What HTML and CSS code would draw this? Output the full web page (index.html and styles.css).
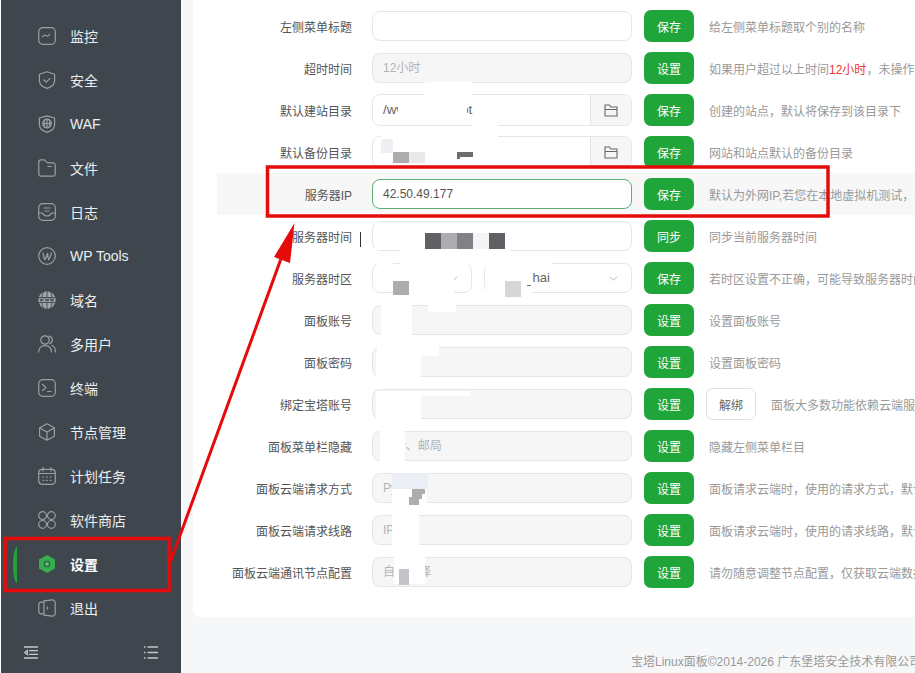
FILE: index.html
```html
<!DOCTYPE html>
<html lang="zh-CN">
<head>
<meta charset="utf-8">
<title>面板设置</title>
<link rel="stylesheet" href="styles.css">
</head>
<body>
<div class="page">
  <aside class="sidebar">
    <nav class="nav">
      <a class="nav-item"><svg class="ico" viewBox="0 0 18 18"><path d="M2 8 9 2l7 6v7a1.500 1.500 0 0 1-1.500 1.500h-11A1.500 1.500 0 0 1 2 15z"/></svg><span>首页</span></a>
      <a class="nav-item"><svg class="ico" viewBox="0 0 18 18"><rect x="0.700" y="0.700" width="16.600" height="16.600" rx="4"/><path d="M4.500 9.800c1.300-2 2.300-2.200 3.500-1.200s2.300.8 3.500-1.300"/></svg><span>监控</span></a>
      <a class="nav-item"><svg class="ico" viewBox="0 0 18 18"><path d="M9 .8 16.600 3.200v6.300c0 4-3.300 6.700-7.600 7.800C4.700 16.200 1.400 13.500 1.400 9.500V3.200z"/><path d="m6 9 2.200 2.100L12 7.400"/></svg><span>安全</span></a>
      <a class="nav-item"><svg class="ico" viewBox="0 0 18 18"><path d="M9 .8 16.600 3v6.500c0 4-3.300 6.700-7.600 7.800C4.700 16.200 1.400 13.500 1.400 9.500V3z"/><circle cx="9" cy="8.500" r="4.300"/><path d="M4.700 8.500h8.600M9 4.200v8.600M6.800 4.800c-1 2.400-1 5 0 7.400M11.200 4.800c1 2.400 1 5 0 7.400"/></svg><span>WAF</span></a>
      <a class="nav-item"><svg class="ico" viewBox="0 0 18 18"><path d="M.8 3A2.200 2.200 0 0 1 3 .8h3.500l3 3H15A2.200 2.200 0 0 1 17.200 6v9a2.200 2.200 0 0 1-2.200 2.200H3A2.200 2.200 0 0 1 .8 15z"/><path d="M10 7.500h3.500"/></svg><span>文件</span></a>
      <a class="nav-item"><svg class="ico" viewBox="0 0 18 18"><rect x="0.700" y="0.700" width="16.600" height="16.600" rx="4"/><path d="M.8 10h3.700c1 2.300 2.500 3 4.500 3s3.500-.7 4.500-3h3.700M6 5h6M7 8h4"/></svg><span>日志</span></a>
      <a class="nav-item"><svg class="ico" viewBox="0 0 18 18"><circle cx="9" cy="9" r="8.300"/><path d="M5 6c.5 2.500 1 5 1.800 6.800C8 10.500 9 8.500 9.700 6.300c0 2.500.2 4.700.9 6.500 1.400-2 2.400-4.300 2.700-7"/></svg><span>WP Tools</span></a>
      <a class="nav-item"><svg class="ico ico-fill" viewBox="0 0 18 18"><circle cx="9" cy="9" r="8.700"/><path class="cut" d="M0 6.500h18M0 11.500h18M9 0v6M9 12v6M5.500 1c-1 1.500-1.400 3.400-1.500 5.500M12.500 1c1 1.500 1.400 3.400 1.500 5.500M4 11.500c.1 2 .5 4 1.500 5.500M14 11.500c-.1 2-.5 4-1.500 5.500"/><path class="cut" d="m2 7.800.8 2.400.8-2.400.8 2.400.8-2.400M7.200 7.800l.9 2.400.9-2.400.9 2.400.9-2.400M12.400 7.800l.8 2.400.8-2.400.8 2.400.8-2.400"/></svg><span>域名</span></a>
      <a class="nav-item"><svg class="ico" viewBox="0 0 18 18"><circle cx="7" cy="5" r="4.200"/><path d="M.6 17c0-4 2.700-6.300 6.400-6.300s6.400 2.300 6.400 6.300M11 1.200c2 .3 3.300 1.800 3.300 3.800 0 1.700-1 3-2.500 3.600M14 10.500c2 .8 3.400 3 3.400 6.500"/></svg><span>多用户</span></a>
      <a class="nav-item"><svg class="ico" viewBox="0 0 18 18"><rect x="0.700" y="0.700" width="16.600" height="16.600" rx="4"/><path d="m4.500 5.500 3.500 3-3.500 3M9.500 12.500h3.500"/></svg><span>终端</span></a>
      <a class="nav-item"><svg class="ico" viewBox="0 0 18 18"><path d="M9 .8 16.400 4.800v8.400L9 17.200 1.600 13.200V4.800zM1.800 5 9 9l7.200-4M9 9v8"/></svg><span>节点管理</span></a>
      <a class="nav-item"><svg class="ico" viewBox="0 0 18 18"><rect x="0.700" y="2.300" width="16.600" height="15" rx="3.500"/><path d="M.8 6.500h16.400M5 .5v3.500M13 .5v3.500M5 10h.8M8.600 10h.8M12.200 10h.8M5 13.300h.8M8.600 13.300h.8M12.200 13.300h.8"/></svg><span>计划任务</span></a>
      <a class="nav-item"><svg class="ico" viewBox="0 0 18 18"><circle cx="4.600" cy="4.600" r="3.900"/><circle cx="13.400" cy="4.600" r="3.900"/><circle cx="4.600" cy="13.400" r="3.900"/><circle cx="13.400" cy="13.400" r="3.900"/></svg><span>软件商店</span></a>
      <a class="nav-item nav-active"><i class="nav-bar"></i><svg class="ico ico-hex" viewBox="0 0 18 18"><path class="hex" d="M9 0 17 4.500v9L9 18 1 13.500v-9z"/><circle class="hex-ring" cx="9" cy="9" r="2.600"/></svg><span>设置</span></a>
      <a class="nav-item"><svg class="ico" viewBox="0 0 18 18"><path d="M6 3.200H3A2.200 2.200 0 0 0 .8 5.400v7.200A2.200 2.200 0 0 0 3 14.800h3M6 1.800 14 .8a3 3 0 0 1 3.200 3v10.400a3 3 0 0 1-3.200 3l-8-1zM9.500 8v2"/></svg><span>退出</span></a>
    </nav>
    <div class="side-tools">
      <svg class="tool" viewBox="0 0 14 13"><path d="M0 1h14M5 4.700h9M5 8.300h9M0 12h14M3.300 4.500 .6 6.500l2.700 2z"/></svg>
      <svg class="tool" viewBox="0 0 14 13"><path d="M3.500 1H14M3.500 6.500H14M3.500 12H14M0 1h1.500M0 6.500h1.500M0 12h1.500"/></svg>
    </div>
  </aside>

  <main class="main">
    <section class="card">
      <div class="row"><label class="lbl">左侧菜单标题</label><div class="field"><div class="inp"></div></div><button class="btn">保存</button><p class="desc">给左侧菜单标题取个别的名称</p></div>
      <div class="row"><label class="lbl">超时时间</label><div class="field"><div class="inp off">12小时</div></div><button class="btn">设置</button><p class="desc">如果用户超过以上时间<em class="hot">12小时</em>，未操作面板将自动退出</p></div>
      <div class="row"><label class="lbl">默认建站目录</label><div class="field"><div class="inp tall group"><span class="grow path">/www/wwwroot</span><span class="addon"><svg class="fold" viewBox="0 0 14 14"><path d="M1 13V2h4.500l1.300 2H13v9zM1 6.500h12"/></svg></span></div></div><button class="btn">保存</button><p class="desc">创建的站点，默认将保存到该目录下</p></div>
      <div class="row"><label class="lbl">默认备份目录</label><div class="field"><div class="inp tall group"><span class="grow"></span><span class="addon"><svg class="fold" viewBox="0 0 14 14"><path d="M1 13V2h4.500l1.300 2H13v9zM1 6.500h12"/></svg></span></div></div><button class="btn">保存</button><p class="desc">网站和站点默认的备份目录</p></div>
      <div class="row row-hover"><label class="lbl">服务器IP</label><div class="field"><div class="inp focus">42.50.49.177</div></div><button class="btn">保存</button><p class="desc">默认为外网IP,若您在本地虚拟机测试，请填写虚拟机IP</p></div>
      <div class="row"><label class="lbl">服务器时间</label><div class="field"><div class="inp"></div></div><button class="btn">同步</button><p class="desc">同步当前服务器时间</p></div>
      <div class="row"><label class="lbl">服务器时区</label><div class="field split"><div class="inp sel sel-a"><svg class="chev" viewBox="0 0 12 7"><path d="m1 1 5 5 5-5"/></svg></div><div class="inp sel sel-b"><span class="zone">Shanghai</span><svg class="chev" viewBox="0 0 12 7"><path d="m1 1 5 5 5-5"/></svg></div></div><button class="btn">保存</button><p class="desc">若时区设置不正确，可能导致服务器时间不准确</p></div>
      <div class="row"><label class="lbl">面板账号</label><div class="field"><div class="inp off"></div></div><button class="btn">设置</button><p class="desc">设置面板账号</p></div>
      <div class="row"><label class="lbl">面板密码</label><div class="field"><div class="inp off"></div></div><button class="btn">设置</button><p class="desc">设置面板密码</p></div>
      <div class="row"><label class="lbl">绑定宝塔账号</label><div class="field"><div class="inp off"></div></div><button class="btn">设置</button><button class="btn btn-plain">解绑</button><p class="desc">面板大多数功能依赖云端服务</p></div>
      <div class="row"><label class="lbl">面板菜单栏隐藏</label><div class="field"><div class="inp off">FTP、邮局</div></div><button class="btn">设置</button><p class="desc">隐藏左侧菜单栏目</p></div>
      <div class="row"><label class="lbl">面板云端请求方式</label><div class="field"><div class="inp off">Python</div></div><button class="btn">设置</button><p class="desc">面板请求云端时，使用的请求方式，默认</p></div>
      <div class="row"><label class="lbl">面板云端请求线路</label><div class="field"><div class="inp off">IPv4</div></div><button class="btn">设置</button><p class="desc">面板请求云端时，使用的请求线路，默认</p></div>
      <div class="row"><label class="lbl">面板云端通讯节点配置</label><div class="field"><div class="inp off">自动选择</div></div><button class="btn">设置</button><p class="desc">请勿随意调整节点配置，仅获取云端数据</p></div>
    </section>
    <footer class="foot">宝塔Linux面板©2014-2026 广东堡塔安全技术有限公司 (bt.cn)</footer>
  </main>
</div>

<svg class="markup" viewBox="0 0 915 673">
  <g class="mask">
    <rect x="425" y="82" width="47" height="24"/><rect x="398" y="96" width="69" height="28"/><rect x="473" y="112" width="25" height="24"/><rect x="435" y="128" width="63" height="24"/>
    <rect x="381" y="136" width="100" height="29"/>
    <rect x="364" y="222" width="240" height="2"/><rect x="375" y="224" width="120" height="26"/><rect x="400" y="249" width="110" height="16"/>
    <rect x="377" y="260" width="16" height="5"/><rect x="393" y="265" width="27" height="32"/><rect x="420" y="268" width="34" height="29"/>
    <rect x="486" y="258" width="46" height="41"/><rect x="532" y="258" width="20" height="6"/>
    <rect x="381" y="300" width="31" height="44"/><rect x="428" y="296" width="28" height="16"/><rect x="393" y="316" width="19" height="7"/>
    <rect x="377" y="336" width="62" height="20"/><rect x="376" y="352" width="45" height="28"/>
    <rect x="376" y="391" width="94" height="5"/><rect x="376" y="391" width="45" height="33"/>
    <rect x="380" y="430" width="25" height="40"/>
    <rect x="392" y="465" width="35" height="42"/>
    <rect x="392" y="506" width="27" height="48"/><rect x="394" y="556" width="31" height="28"/>
  </g>
  <rect class="c1" x="381" y="139" width="12" height="14"/>
  <rect class="c2" x="393" y="152" width="16" height="11"/>
  <rect class="c3" x="409" y="152" width="16" height="11"/>
  <path class="c4" d="M457 165v-6h3v-2h13v-5h-16z"/>
  <rect class="c5" x="425" y="233" width="16" height="16"/><rect class="c2" x="441" y="233" width="16" height="16"/><rect class="c6" x="457" y="233" width="16" height="16"/><rect class="c7" x="473" y="233" width="16" height="16"/><rect class="c5" x="489" y="233" width="16" height="16"/>
  <rect class="c8" x="360" y="232" width="1" height="15"/>
  <rect class="c2" x="393" y="281" width="16" height="14"/>
  <rect class="c9" x="505" y="281" width="16" height="16"/>
  <rect class="c4" x="527" y="285" width="4" height="1"/>
  <rect class="c10" x="392" y="473" width="36" height="16"/>
  <path class="c2" d="M409 505v-8h3v-8h13v5h-3v5h-3v6z"/>
  <rect class="c11" x="399" y="569" width="10" height="16"/>
  <rect class="box" x="267.500" y="167" width="560.500" height="49"/>
  <rect class="box" x="5" y="538.500" width="164" height="52"/>
  <path class="line" d="M170 563 282 256"/>
  <path class="head" d="M294.500 223 290 263 274 257z"/>
</svg>
</body>
</html>
```
FILE: styles.css
```css
* { box-sizing: border-box; }
html, body { margin: 0; height: 100%; overflow: hidden; background: #fff; }
body { font-family: "Liberation Sans", "Noto Sans CJK SC", sans-serif; font-size: 12px; position: relative; }
.page { display: flex; height: 673px; padding-left: 1px; }

.sidebar { width: 180px; flex: none; background: #3f464e; display: flex; flex-direction: column; overflow: hidden; }
.nav { margin-top: -30px; display: flex; flex-direction: column; }
.nav-item { position: relative; height: 44px; display: flex; align-items: center; padding-left: 37px; color: #eceef0; font-size: 14px; gap: 14px; }
.nav-active { color: #fff; font-weight: 700; }
.nav-bar { position: absolute; left: 12px; top: 5px; width: 4px; height: 36px; background: #20a53a; border-radius: 4px 0 0 4px / 50% 0 0 50%; }
.ico { width: 18px; height: 18px; flex: none; fill: none; stroke: #9aa0a5; stroke-width: 1.200; stroke-linecap: round; stroke-linejoin: round; }
.ico-fill { stroke: none; }
.ico-fill circle { fill: #a2a6aa; }
.cut { fill: none; stroke: #3f464e; stroke-width: .9; }
.ico-hex { stroke: none; }
.hex { fill: #37ad50; }
.hex-ring { fill: #6cc084; stroke: #1f6f3a; stroke-width: 1.500; }
.side-tools { margin-top: auto; height: 46px; padding: 2px 23px 0; display: flex; justify-content: space-between; align-items: center; }
.tool { width: 14px; height: 13px; fill: none; stroke: #c6c9cc; stroke-width: 1.300; }

.main { flex: 1; min-width: 0; background: #f6f7f8; padding-left: 12px; display: flex; flex-direction: column; }
.card { height: 617px; background: #fff; border-radius: 0 0 0 8px; padding: 5px 0 0 24px; overflow: hidden; }
.row { height: 42px; display: flex; align-items: center; white-space: nowrap; color: #666; }
.row-hover { background: #f7f7f7; }
.lbl { width: 135px; flex: none; text-align: right; color: #555; margin-right: 20px; }
.field { width: 260px; flex: none; display: flex; gap: 12px; }
.inp { flex: 1; height: 30px; line-height: 28px; padding: 0 10px; background: #fff; border: 1px solid #e4e6ea; border-radius: 8px; color: #666; }
.off { background: #f6f6f7; color: #b0b3b8; }
.tall { height: 32px; line-height: 30px; }
.focus { border-color: #5fae72; color: #555; background: #fff; }
.group { display: flex; padding: 0 0 0 10px; overflow: hidden; }
.grow { flex: 1; }
.path { font-size: 13.500px; }
.zone { font-size: 13px; }
.addon { width: 41px; background: #f6f6f7; border-left: 1px solid #e4e6ea; display: flex; align-items: center; justify-content: center; }
.fold { width: 14px; height: 14px; fill: none; stroke: #666; stroke-width: 1.100; }
.sel { display: flex; justify-content: space-between; align-items: center; padding-right: 13px; }
.sel-a { flex: none; width: 100px; }
.sel-b { flex: none; width: 148px; }
.chev { width: 9px; height: 5px; fill: none; stroke: #a8abb0; stroke-width: 1.200; margin-left: auto; }
.btn { width: 50px; height: 32px; margin-left: 12px; padding: 0; flex: none; border: 0; border-radius: 7px; background: #20a53a; color: #fff; font: inherit; }
.btn-plain { background: #fff; color: #666; border: 1px solid #dcdfe6; }
.desc { margin: 0 0 0 15px; color: #999; flex: none; }
.hot { font-style: normal; color: #e33; }
.foot { padding: 35px 0 0 438px; color: #999; white-space: nowrap; }

.markup { position: absolute; left: 0; top: 0; width: 915px; height: 673px; pointer-events: none; }
.mask rect { fill: #fff; }
.c1 { fill: #eeeef3; }
.c2 { fill: #adadb0; }
.c3 { fill: #e9e9ea; }
.c4 { fill: #6e6e70; }
.c5 { fill: #5f6064; }
.c6 { fill: #808184; }
.c7 { fill: #f4f4f4; }
.c8 { fill: #333; }
.c9 { fill: #d6d6d9; }
.c10 { fill: #eceef5; }
.c11 { fill: #c4c4c8; }
.box { fill: none; stroke: #e60b0b; stroke-width: 3.500; }
.line { fill: none; stroke: #e60b0b; stroke-width: 3; }
.head { fill: #e60b0b; }
```
